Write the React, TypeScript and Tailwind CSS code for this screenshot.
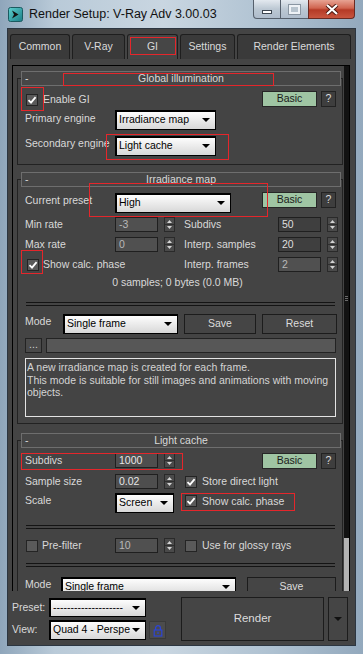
import React from "react";

function Check({ on = false }: { on?: boolean }) {
  return (
    <div className="w-[12px] h-[12px] shrink-0 bg-[#5a5a5a] border border-[#242424] flex items-center justify-center">
      {on && (
        <svg width="10" height="10" viewBox="0 0 10 10">
          <path d="M1.5 5.2 L4 7.6 L8.6 2.2" fill="none" stroke="#ffffff" strokeWidth="1.8" />
        </svg>
      )}
    </div>
  );
}

function Arrows() {
  return (
    <div className="w-[11px] h-[15px] shrink-0 border border-[#2a2a2a] bg-[#4a4a4a] flex flex-col items-center justify-center">
      <svg width="5" height="3" viewBox="0 0 5 3">
        <path d="M2.5 0L5 3H0z" fill="#d4d4d4" />
      </svg>
      <div className="w-[9px] h-px bg-[#2e2e2e] my-[1px]" />
      <svg width="5" height="3" viewBox="0 0 5 3">
        <path d="M0 0H5L2.5 3z" fill="#d4d4d4" />
      </svg>
    </div>
  );
}

function Spinner({ value, tone = "dark" }: { value: string; tone?: "dark" | "dim" | "light" }) {
  const look =
    tone === "dim"
      ? "bg-[#505050] text-[#b8b8b8]"
      : tone === "light"
      ? "bg-[#4e4e4e] text-[#e6e6e6]"
      : "bg-[#3f3f3f] text-[#dedede]";
  return (
    <div className="flex items-center gap-[6px] shrink-0">
      <div className={`w-[43px] h-[15px] border border-[#1f1f1f] pl-[3px] flex items-center ${look}`}>{value}</div>
      <Arrows />
    </div>
  );
}

function Drop({ text, className = "" }: { text: string; className?: string }) {
  return (
    <div
      className={`h-[20px] shrink-0 border border-black shadow-[inset_1px_1px_0_#000] bg-[linear-gradient(#ffffff,#d8d8d8)] flex items-center pl-[3px] pr-[5px] text-black ${className}`}
    >
      <span className="flex-1 overflow-hidden whitespace-nowrap">{text}</span>
      <svg width="8" height="4" viewBox="0 0 8 4" className="shrink-0">
        <path d="M0 0H8L4 4z" fill="#000" />
      </svg>
    </div>
  );
}

function Btn({ children, className = "" }: { children: React.ReactNode; className?: string }) {
  return (
    <div
      className={`h-[20px] shrink-0 border border-[#1c1c1c] bg-[#454545] flex items-center justify-center text-[#dcdcdc] ${className}`}
    >
      {children}
    </div>
  );
}

function BasicHelp() {
  return (
    <div className="ml-auto flex gap-[4px] self-start">
      <div className="w-[55px] h-[16px] border border-[#262626] bg-[#9fc5a3] text-[#1a1a1a] flex items-center justify-center">
        Basic
      </div>
      <div className="w-[15px] h-[16px] border border-[#222] bg-[#3e3e3e] text-[#dcdcdc] flex items-center justify-center">
        ?
      </div>
    </div>
  );
}

function Sep({ className = "" }: { className?: string }) {
  return <div className={`mx-[1px] h-[4px] border-y border-[#141414] ${className}`} />;
}

function Rollout({
  title,
  className = "",
  children,
}: {
  title: string;
  className?: string;
  children: React.ReactNode;
}) {
  return (
    <div className={`ml-[4px] mr-[1px] ${className}`}>
      <div className="relative z-10 ml-[4px] mr-[2px] h-[15px] border border-[#6e6e6e] bg-[#464646] flex items-center">
        <span className="w-[10px] pl-[3px] leading-none">-</span>
        <span className="flex-1 text-center pr-[10px]">{title}</span>
      </div>
      <div className="-mt-[8px] pt-[8px] border border-[#222222]">{children}</div>
    </div>
  );
}

function Red({ className }: { className: string }) {
  return <div className={`absolute border border-[#e5262b] pointer-events-none z-20 ${className}`} />;
}

export default function App() {
  return (
    <div className="relative w-[363px] h-[654px] overflow-hidden flex flex-col font-['Liberation_Sans',Arial,sans-serif] text-[10.5px] text-[#d9d9d9] bg-[linear-gradient(90deg,#8fa6bb,#b9cad8_15%,#c9d6e1_45%,#aec1d1_75%,#93a9bd)]">
      {/* Title bar */}
      <div className="h-[28px] shrink-0 flex items-start">
        <svg width="15" height="15" viewBox="0 0 15 15" className="ml-[8px] mt-[7px]">
          <defs>
            <linearGradient id="ic" x1="0" y1="0" x2="1" y2="1">
              <stop offset="0" stopColor="#5fd0cf" />
              <stop offset="1" stopColor="#1a7d86" />
            </linearGradient>
          </defs>
          <rect x="0.5" y="0.5" width="14" height="14" rx="2" fill="url(#ic)" stroke="#1b5a60" />
          <path d="M4 3.5 L10.5 7.5 L4 11.5 L6 7.5z" fill="#111" />
        </svg>
        <span className="ml-[6px] mt-[6px] text-[12.5px] text-[#111] leading-[16px]">
          Render Setup: V-Ray Adv 3.00.03
        </span>
        <div className="ml-auto mr-[8px] flex h-[20px]">
          <div className="w-[28px] h-[19px] border border-[#56606c] border-t-0 rounded-bl-[4px] bg-[linear-gradient(#e3e9ef,#bcc8d3_50%,#aebccb)] flex items-end justify-center pb-[4px]">
            <div className="w-[10px] h-[4px] bg-white border border-[#3d4650]" />
          </div>
          <div className="w-[27px] h-[19px] border-b border-[#56606c] bg-[linear-gradient(#e3e9ef,#bcc8d3_50%,#aebccb)] flex items-center justify-center">
            <div className="w-[11px] h-[9px] border-[2px] border-[#eef2f6] outline outline-1 outline-[#8a96a2] bg-[#b8c4ce]" />
          </div>
          <div className="w-[47px] h-[19px] border border-[#6a2a22] border-t-0 rounded-br-[4px] bg-[linear-gradient(#e7a393,#d0644f_45%,#b53a26_55%,#c8553f)] flex items-center justify-center">
            <svg width="14" height="11" viewBox="0 0 14 11">
              <path d="M2 1 L12 10 M12 1 L2 10" stroke="#4b1810" strokeWidth="4" />
              <path d="M2 1 L12 10 M12 1 L2 10" stroke="#ffffff" strokeWidth="2.2" />
            </svg>
          </div>
        </div>
      </div>

      {/* Client */}
      <div className="mx-[7px] h-[618px] shrink-0 border border-[#2c3641] bg-[#444444] flex flex-col">
        {/* Tabs */}
        <div className="mt-[5px] pl-[2px] flex gap-[2px] text-[#dadada]">
          <div className="w-[60px] h-[25px] rounded-t-[3px] border border-b-0 border-[#1e1e1e] bg-[#3a3a3a] flex items-center justify-center">Common</div>
          <div className="w-[53px] h-[25px] rounded-t-[3px] border border-b-0 border-[#1e1e1e] bg-[#3a3a3a] flex items-center justify-center">V-Ray</div>
          <div className="w-[51px] h-[25px] rounded-t-[3px] border border-b-0 border-[#1e1e1e] bg-[#464646] flex items-center justify-center">GI</div>
          <div className="w-[55px] h-[25px] rounded-t-[3px] border border-b-0 border-[#1e1e1e] bg-[#3a3a3a] flex items-center justify-center">Settings</div>
          <div className="w-[114px] h-[25px] rounded-t-[3px] border border-b-0 border-[#1e1e1e] bg-[#3a3a3a] flex items-center justify-center">Render Elements</div>
        </div>

        {/* Scroll region */}
        <div className="mt-[6px] ml-[4px] mr-[5px] h-[526px] shrink-0 border-x border-t border-black flex overflow-hidden">
          <div className="flex-1 pt-[5px] overflow-hidden">
            {/* Global illumination */}
            <Rollout title="Global illumination">
              <div className="pl-[7px] pr-[6px] pb-[7px]">
                <div className="mt-[4px] h-[17px] flex items-center">
                  <div className="ml-[1px]">
                    <Check on />
                  </div>
                  <span className="ml-[5px]">Enable GI</span>
                  <BasicHelp />
                </div>
                <div className="mt-[1px] h-[22px] flex items-center">
                  <div className="w-[90px] shrink-0 -mt-[3px]">Primary engine</div>
                  <Drop text="Irradiance map" className="w-[101px]" />
                </div>
                <div className="mt-[4px] h-[22px] flex items-center">
                  <div className="w-[90px] shrink-0 -mt-[4px] whitespace-nowrap">Secondary engine</div>
                  <Drop text="Light cache" className="w-[101px]" />
                </div>
              </div>
            </Rollout>

            {/* Irradiance map */}
            <Rollout title="Irradiance map" className="mt-[7px]">
              <div className="pl-[7px] pr-[6px] pb-[6px]">
                <div className="mt-[4px] h-[21px] flex items-center">
                  <div className="w-[90px] shrink-0 -mt-[3px]">Current preset</div>
                  <Drop text="High" className="w-[116px]" />
                  <BasicHelp />
                </div>
                <div className="mt-[4px] h-[15px] flex items-center">
                  <div className="w-[90px] shrink-0">Min rate</div>
                  <Spinner value="-3" tone="dim" />
                  <div className="ml-[9px] w-[94px] shrink-0">Subdivs</div>
                  <Spinner value="50" />
                </div>
                <div className="mt-[5px] h-[15px] flex items-center">
                  <div className="w-[90px] shrink-0">Max rate</div>
                  <Spinner value="0" tone="dim" />
                  <div className="ml-[9px] w-[94px] shrink-0">Interp. samples</div>
                  <Spinner value="20" />
                </div>
                <div className="mt-[5px] h-[15px] flex items-center">
                  <div className="w-[90px] shrink-0 flex items-center">
                    <div className="ml-[2px]">
                      <Check on />
                    </div>
                    <span className="ml-[4px] whitespace-nowrap">Show calc. phase</span>
                  </div>
                  <div className="ml-[69px] w-[94px] shrink-0">Interp. frames</div>
                  <Spinner value="2" tone="dim" />
                </div>
                <div className="mt-[3px] h-[15px] flex items-center justify-center pr-[6px]">
                  0 samples; 0 bytes (0.0 MB)
                </div>
                <Sep className="mt-[12px] -mx-[6px]" />
                <div className="mt-[8px] h-[20px] flex items-center">
                  <div className="w-[38px] shrink-0 -mt-[4px]">Mode</div>
                  <Drop text="Single frame" className="w-[115px]" />
                  <Btn className="ml-[6px] w-[72px]">Save</Btn>
                  <Btn className="ml-[6px] w-[75px]">Reset</Btn>
                </div>
                <div className="mt-[4px] h-[15px] flex items-center">
                  <div className="w-[17px] h-[15px] border border-[#232323] bg-[#4a4a4a] flex items-center justify-center text-[#cfcfcf] leading-none pb-[2px]">
                    ...
                  </div>
                  <div className="ml-[4px] flex-1 h-[15px] border border-[#232323] bg-[#575757]" />
                </div>
                <div className="mt-[5px] h-[59px] border border-[#e4e4e4] pl-[1px] pt-[2px] leading-[12.5px] text-[#d4d4d4]">
                  A new irradiance map is created for each frame.
                  <br />
                  This mode is suitable for still images and animations with moving objects.
                </div>
              </div>
            </Rollout>

            {/* Light cache */}
            <Rollout title="Light cache" className="mt-[9px]">
              <div className="pl-[7px] pr-[6px] pb-[20px]">
                <div className="mt-[4px] h-[15px] flex items-center">
                  <div className="w-[90px] shrink-0">Subdivs</div>
                  <Spinner value="1000" tone="light" />
                  <BasicHelp />
                </div>
                <div className="mt-[6px] h-[15px] flex items-center">
                  <div className="w-[90px] shrink-0">Sample size</div>
                  <Spinner value="0.02" tone="light" />
                  <div className="ml-[10px]">
                    <Check on />
                  </div>
                  <span className="ml-[5px]">Store direct light</span>
                </div>
                <div className="mt-[4px] h-[20px] flex items-center">
                  <div className="w-[90px] shrink-0 -mt-[4px]">Scale</div>
                  <Drop text="Screen" className="w-[59px]" />
                  <div className="ml-[11px] self-start mt-[2px]">
                    <Check on />
                  </div>
                  <span className="ml-[5px] self-start mt-[1px]">Show calc. phase</span>
                </div>
                <Sep className="mt-[12px] -mx-[6px]" />
                <div className="mt-[9px] h-[15px] flex items-center">
                  <div className="w-[90px] shrink-0 flex items-center">
                    <div className="ml-[1px]">
                      <Check />
                    </div>
                    <span className="ml-[4px]">Pre-filter</span>
                  </div>
                  <Spinner value="10" tone="dim" />
                  <div className="ml-[10px]">
                    <Check />
                  </div>
                  <span className="ml-[5px]">Use for glossy rays</span>
                </div>
                <Sep className="mt-[10px] -mx-[6px]" />
                <div className="mt-[10px] h-[20px] flex items-center">
                  <div className="w-[36px] shrink-0 -mt-[4px]">Mode</div>
                  <Drop text="Single frame" className="w-[175px]" />
                  <Btn className="ml-[11px] w-[89px]">Save</Btn>
                </div>
              </div>
            </Rollout>
          </div>

          {/* Scrollbar */}
          <div className="w-[5px] shrink-0 bg-[#121212] flex flex-col">
            <div className="mt-[230px] flex flex-col gap-[1px] items-center">
              <div className="w-[3px] h-px bg-[#6a6a6a]" />
              <div className="w-[3px] h-px bg-[#6a6a6a]" />
              <div className="w-[3px] h-px bg-[#6a6a6a]" />
            </div>
            <div className="flex-1" />
            <div className="h-[53px] bg-[#b3b3b3]" />
          </div>
        </div>

        {/* Bottom */}
        <div className="flex pl-[4px] pt-[6px]">
          <div className="flex flex-col">
            <div className="mt-[1px] h-[19px] flex items-center">
              <div className="w-[37px] shrink-0">Preset:</div>
              <Drop text="--------------------" className="w-[97px] !h-[19px]" />
            </div>
            <div className="mt-[3px] h-[20px] flex items-center">
              <div className="w-[37px] shrink-0">View:</div>
              <Drop text="Quad 4 - Perspe" className="w-[97px]" />
              <div className="ml-[3px] w-[17px] h-[18px] bg-[#4c4c4c] border border-[#3a3a3a] flex items-center justify-center">
                <svg width="10" height="13" viewBox="0 0 10 13">
                  <path d="M2.6 6V4.1a2.4 2.4 0 0 1 4.8 0V6" fill="none" stroke="#2c44d6" strokeWidth="1.3" />
                  <rect x="1.2" y="6" width="7.6" height="6" fill="none" stroke="#2c44d6" strokeWidth="1.2" />
                  <rect x="4.4" y="7.8" width="1.2" height="2.2" fill="#2c44d6" />
                </svg>
              </div>
            </div>
          </div>
          <Btn className="ml-[15px] w-[143px] !h-[44px] text-[11.5px]">Render</Btn>
          <Btn className="ml-[4px] w-[20px] !h-[44px]">
            <svg width="8" height="4" viewBox="0 0 8 4">
              <path d="M0 0H8L4 4z" fill="#111" />
            </svg>
          </Btn>
        </div>
      </div>

      {/* Annotation rectangles */}
      <Red className="left-[130px] top-[37px] w-[46px] h-[18px]" />
      <Red className="left-[63px] top-[73px] w-[211px] h-[13px]" />
      <Red className="left-[21px] top-[87px] w-[23px] h-[24px]" />
      <Red className="left-[106px] top-[134px] w-[123px] h-[26px]" />
      <Red className="left-[89px] top-[183px] w-[179px] h-[34px]" />
      <Red className="left-[21px] top-[250px] w-[22px] h-[24px]" />
      <Red className="left-[21px] top-[453px] w-[162px] h-[17px]" />
      <Red className="left-[181px] top-[493px] w-[114px] h-[18px]" />
    </div>
  );
}
